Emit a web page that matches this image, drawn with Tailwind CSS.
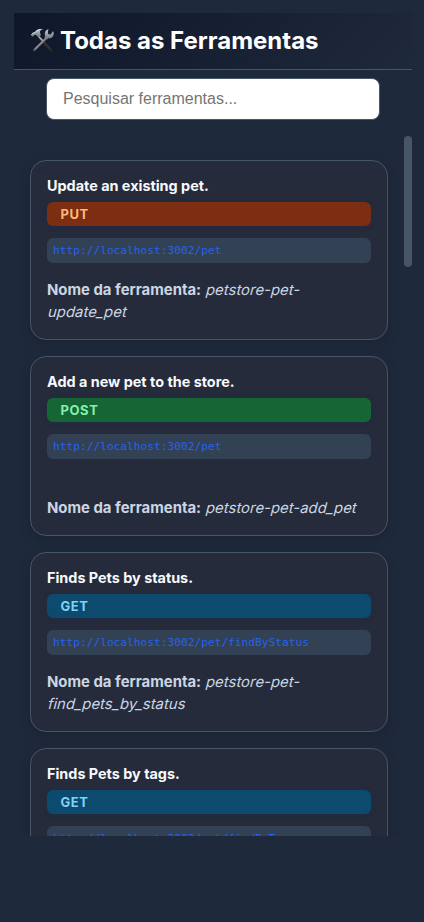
<!DOCTYPE html>
<html lang="pt-BR">
<head>
<meta charset="utf-8">
<title>Todas as Ferramentas</title>
<script src="https://cdn.jsdelivr.net/npm/@tailwindcss/browser@4"></script>
</head>
<body class="h-[922px] overflow-hidden bg-[#1e293b] font-[Inter,sans-serif]">
<div class="flex h-full flex-col pl-[14px] pr-3 pt-[13px]">
  <header class="flex h-[57px] shrink-0 items-center border-b border-[#475569] bg-linear-135 from-[#0f172a] to-[#1e293b] pl-4">
    <svg class="mr-[6px] mb-[2px] h-6 w-6 shrink-0" viewBox="0 0 24 24" fill="none">
      <defs>
        <linearGradient id="steel" x1="0" y1="0" x2="0" y2="1"><stop offset="0" stop-color="#c3cbd2"/><stop offset="1" stop-color="#68727b"/></linearGradient>
      </defs>
      <path d="M10.5 11L20.8 22" stroke="#29292c" stroke-width="2.9" stroke-linecap="round"/>
      <path d="M10.8 10.4L20 20.4" stroke="#48474d" stroke-width=".7"/>
      <path d="M17.1 9.5L4.3 22" stroke="#77747a" stroke-width="2.3" stroke-linecap="round"/>
      <path d="M16.3 9.5L4.6 21" stroke="#b5a5a3" stroke-width=".8"/>
      <path d="M8.5 8.2L12.5 12.5" stroke="#b3bac0" stroke-width="1.6"/>
      <circle cx="4.3" cy="22" r=".7" fill="#3b2b30"/>
      <path d="M18.6 1.2C15.3 1.8 14 5 15.2 7.8l-.8 1.1 2.5 2.5 1.4-1.1c3 .8 5.4-1.5 5.4-5.3l-.7-2-2.2 3.6-2.7-.7-.2-2.7z" fill="url(#steel)"/>
      <path d="M.7 7L3.2 4.4l1.2.2C6.6 1.2 9.7.3 13.4 1.3c-2 .2-3.2 1.2-3.5 2.6l1 3.3-2.6 2.2-2.4-2.6-1.6.2-1.5 1.8z" fill="url(#steel)"/>
      <path d="M1.5 6.5l2-1.7 1 .2C6.3 2.5 8.2 1.6 10.5 1.4" stroke="#e5eaed" stroke-width=".8"/>
    </svg>
    <h1 class="text-[24px] leading-8 font-bold text-white">Todas as Ferramentas</h1>
  </header>
  <div class="h-[66px] shrink-0 pl-8 pr-8 pt-2">
    <input type="text" placeholder="Pesquisar ferramentas..." class="h-[42px] w-full rounded-lg border border-[#475569] bg-white px-4 font-['Liberation_Sans',sans-serif] text-base placeholder:text-[#757575]">
  </div>
  <main class="flex h-[700px] overflow-hidden">
    <div class="flex w-[390px] shrink-0 flex-col gap-4 px-4 pt-6">
      <article class="flex h-[180px] shrink-0 flex-col rounded-2xl border border-[#475569] bg-[#252b3b] px-4 pt-4 shadow-[0_4px_12px_rgba(0,0,0,0.15)]">
        <h2 class="h-[25px] text-[14.4px] leading-[18px] font-bold text-[#f8fafc]">Update an existing pet.</h2>
        <span class="h-6 shrink-0 rounded-md bg-[#7c2d12] px-[13.4px] text-[13px] leading-[25px] font-bold tracking-[0.6px] text-[#fdba74] shadow-[0_1px_4px_rgba(30,41,80,0.5)]">PUT</span>
        <code class="mt-3 h-[25px] shrink-0 rounded-md bg-[#334155] px-[6px] font-['DejaVu_Sans_Mono',monospace] text-[11.2px] leading-[26px] text-[#2563eb]">http://localhost:3002/pet</code>
        <p class="mt-auto mb-4 text-[14.9px] leading-[22px] text-[#cbd5e1]"><strong class="font-bold">Nome da ferramenta:</strong> <span class="inline-block origin-[0_16px] skew-x-[-14deg]">petstore-pet-</span><br><span class="inline-block origin-[0_16px] skew-x-[-14deg]">update_pet</span></p>
      </article>
      <article class="flex h-[180px] shrink-0 flex-col rounded-2xl border border-[#475569] bg-[#252b3b] px-4 pt-4 shadow-[0_4px_12px_rgba(0,0,0,0.15)]">
        <h2 class="h-[25px] text-[14.4px] leading-[18px] font-bold text-[#f8fafc]">Add a new pet to the store.</h2>
        <span class="h-6 shrink-0 rounded-md bg-[#166534] px-[13.4px] text-[13px] leading-[25px] font-bold tracking-[0.6px] text-[#86efac] shadow-[0_1px_4px_rgba(30,41,80,0.5)]">POST</span>
        <code class="mt-3 h-[25px] shrink-0 rounded-md bg-[#334155] px-[6px] font-['DejaVu_Sans_Mono',monospace] text-[11.2px] leading-[26px] text-[#2563eb]">http://localhost:3002/pet</code>
        <p class="mt-auto mb-4 text-[14.9px] leading-[22px] whitespace-nowrap text-[#cbd5e1]"><strong class="font-bold">Nome da ferramenta:</strong> <span class="inline-block origin-[0_16px] skew-x-[-14deg]">petstore-pet-add_pet</span></p>
      </article>
      <article class="flex h-[180px] shrink-0 flex-col rounded-2xl border border-[#475569] bg-[#252b3b] px-4 pt-4 shadow-[0_4px_12px_rgba(0,0,0,0.15)]">
        <h2 class="h-[25px] text-[14.4px] leading-[18px] font-bold text-[#f8fafc]">Finds Pets by status.</h2>
        <span class="h-6 shrink-0 rounded-md bg-[#0c4a6e] px-[13.4px] text-[13px] leading-[25px] font-bold tracking-[0.6px] text-[#7dd3fc] shadow-[0_1px_4px_rgba(30,41,80,0.5)]">GET</span>
        <code class="mt-3 h-[25px] shrink-0 rounded-md bg-[#334155] px-[6px] font-['DejaVu_Sans_Mono',monospace] text-[11.2px] leading-[26px] text-[#2563eb]">http://localhost:3002/pet/findByStatus</code>
        <p class="mt-auto mb-4 text-[14.9px] leading-[22px] text-[#cbd5e1]"><strong class="font-bold">Nome da ferramenta:</strong> <span class="inline-block origin-[0_16px] skew-x-[-14deg]">petstore-pet-</span><br><span class="inline-block origin-[0_16px] skew-x-[-14deg]">find_pets_by_status</span></p>
      </article>
      <article class="flex h-[180px] shrink-0 flex-col rounded-2xl border border-[#475569] bg-[#252b3b] px-4 pt-4 shadow-[0_4px_12px_rgba(0,0,0,0.15)]">
        <h2 class="h-[25px] text-[14.4px] leading-[18px] font-bold text-[#f8fafc]">Finds Pets by tags.</h2>
        <span class="h-6 shrink-0 rounded-md bg-[#0c4a6e] px-[13.4px] text-[13px] leading-[25px] font-bold tracking-[0.6px] text-[#7dd3fc] shadow-[0_1px_4px_rgba(30,41,80,0.5)]">GET</span>
        <code class="mt-3 h-[25px] shrink-0 rounded-md bg-[#334155] px-[6px] font-['DejaVu_Sans_Mono',monospace] text-[11.2px] leading-[26px] text-[#2563eb]">http://localhost:3002/pet/findByTags</code>
      </article>
    </div>
    <div class="h-[131px] w-2 shrink-0 rounded-full bg-[#475569]"></div>
  </main>
</div>
</body>
</html>
